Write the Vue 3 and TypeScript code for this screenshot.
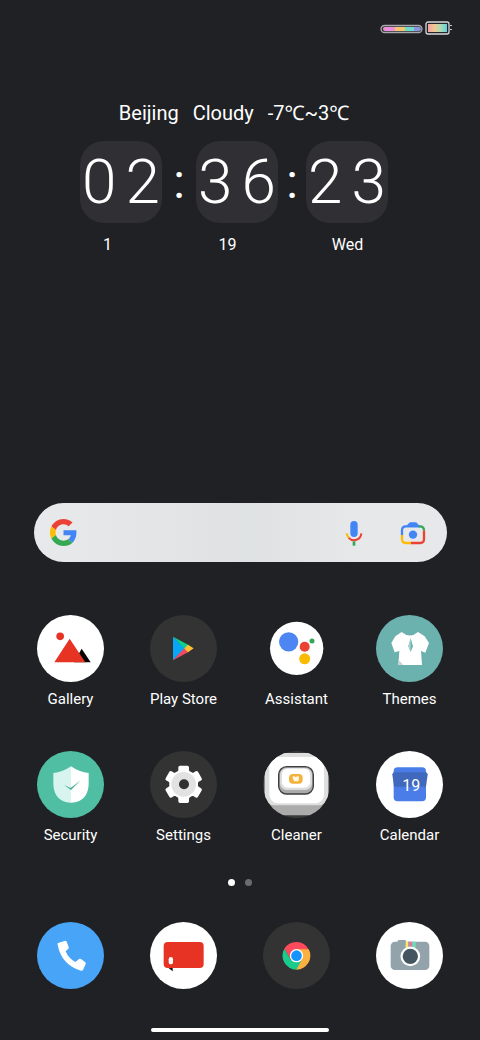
<script setup lang="ts">
import { ref } from 'vue'

interface App {
  id: string
  label: string
  view: string
}

const apps: App[] = [
  { id: 'gallery', label: 'Gallery', view: '53 29 201 201' },
  { id: 'play', label: 'Play Store', view: '392 29 201 201' },
  { id: 'assistant', label: 'Assistant', view: '40 29 201 201' },
  { id: 'themes', label: 'Themes', view: '379 29 201 201' },
  { id: 'security', label: 'Security', view: '53 32 201 201' },
  { id: 'settings', label: 'Settings', view: '392 32 201 201' },
  { id: 'cleaner', label: 'Cleaner', view: '41 32 201 201' },
  { id: 'calendar', label: 'Calendar', view: '379 32 201 201' },
]

const dock: App[] = [
  { id: 'phone', label: 'Phone', view: '52 156 201 201' },
  { id: 'messages', label: 'Messages', view: '391 156 201 201' },
  { id: 'chrome', label: 'Chrome', view: '69 156 201 201' },
  { id: 'camera', label: 'Camera', view: '408 156 201 201' },
]

const weather = ['Beijing', 'Cloudy', '-7℃~3℃']
const time = ['02', '36', '23']
const date = ['1', '19', 'Wed']
const query = ref('')
const page = ref(0)
const teeth = [0, 60, 120, 180, 240, 300]
</script>

<template>
  <main class="home">
    <header class="status">
      <svg class="status-icons" viewBox="0 0 75 16" aria-hidden="true">
        <defs>
          <linearGradient id="bat" x1="0" x2="1">
            <stop offset="0" stop-color="#f2a2a5" />
            <stop offset="0.35" stop-color="#f0c890" />
            <stop offset="0.7" stop-color="#a5dcb8" />
            <stop offset="1" stop-color="#62cfe0" />
          </linearGradient>
          <clipPath id="pill"><rect x="3" y="7" width="38" height="4" rx="2" /></clipPath>
        </defs>
        <rect x="1" y="5.5" width="41" height="7" rx="3.5" fill="#35363a" stroke="#a9a9ad" stroke-width="1.3" />
        <g clip-path="url(#pill)">
          <rect x="2" y="7" width="13" height="4" fill="#ee8fdc" />
          <rect x="15" y="7" width="10" height="4" fill="#f3c571" />
          <rect x="25" y="7" width="9" height="4" fill="#6fdcc9" />
          <rect x="34" y="7" width="8" height="4" fill="#8c92e0" />
        </g>
        <rect x="46" y="2" width="23" height="12" rx="2" fill="#242529" stroke="#d9d9dc" stroke-width="1.3" />
        <rect x="48" y="4" width="19" height="8" fill="url(#bat)" />
        <path d="M70 5.500h2M70 9.500h2" stroke="#c9c9cc" stroke-width="1.2" />
      </svg>
    </header>

    <section class="widget" aria-label="Clock and weather">
      <p class="weather"><span v-for="w in weather" :key="w">{{ w }}</span></p>
      <div class="clock">
        <template v-for="(pair, i) in time" :key="i">
          <span v-if="i > 0" class="colon" :class="{ wide: i === 1 }">:</span>
          <span class="tile"><span v-for="(d, j) in pair" :key="j">{{ d }}</span></span>
        </template>
      </div>
      <p class="date"><span v-for="d in date" :key="d">{{ d }}</span></p>
    </section>

    <form class="search" role="search" @submit.prevent>
      <svg class="google" viewBox="0 0 48 48" aria-hidden="true">
        <path fill="#ea4335" d="M24 9.500c3.540 0 6.710 1.220 9.210 3.600l6.850-6.850C35.900 2.380 30.470 0 24 0 14.620 0 6.510 5.380 2.560 13.220l7.980 6.190C12.430 13.720 17.740 9.500 24 9.500z" />
        <path fill="#4285f4" d="M46.980 24.550c0-1.570-.15-3.090-.38-4.550H24v9.020h12.940c-.58 2.960-2.260 5.480-4.780 7.180l7.730 6c4.510-4.180 7.090-10.360 7.090-17.650z" />
        <path fill="#fbbc05" d="M10.530 28.590c-.48-1.450-.76-2.990-.76-4.590s.27-3.140.76-4.590l-7.980-6.190C.92 16.460 0 20.120 0 24c0 3.880.92 7.540 2.560 10.780l7.970-6.190z" />
        <path fill="#34a853" d="M24 48c6.480 0 11.930-2.130 15.890-5.810l-7.730-6c-2.150 1.450-4.920 2.300-8.160 2.300-6.260 0-11.570-4.220-13.470-9.910l-7.980 6.190C6.510 42.620 14.620 48 24 48z" />
      </svg>
      <input v-model="query" type="text" aria-label="Search" />
      <button type="button" class="tool" aria-label="Voice search">
        <svg viewBox="61 71 84 84" aria-hidden="true">
          <rect x="92" y="77" width="22" height="48" rx="11" fill="#4285f4" />
          <path d="M81 114a22 22 0 0 0 7 14" fill="none" stroke="#fbbc05" stroke-width="6" />
          <path d="M87 127.500a22 22 0 0 0 38-13.500" fill="none" stroke="#ea4335" stroke-width="6" />
          <path d="M103 138v13" stroke="#34a853" stroke-width="8" />
        </svg>
      </button>
      <button type="button" class="tool" aria-label="Search with camera">
        <svg viewBox="237 71 84 84" aria-hidden="true">
          <g fill="none" stroke-width="7">
            <path d="M246 119v-14q0-12 12-12h42" stroke="#4285f4" />
            <path d="M296 93h4q12 0 12 13" stroke="#34a853" />
            <path d="M312 106v26q0 11-11 11h-29" stroke="#ea4335" />
            <path d="M246 119v13q0 11 11 11h16" stroke="#fbbc05" />
          </g>
          <path d="M257 94l10-11q2-2 5-2h14q3 0 5 2l9 11z" fill="#4285f4" />
          <circle cx="279" cy="118" r="12.500" fill="#4285f4" />
        </svg>
      </button>
    </form>

    <nav class="apps" aria-label="Apps">
      <button v-for="a in apps" :key="a.id" type="button" class="app">
        <svg class="icon" :viewBox="a.view" aria-hidden="true">
          <g v-if="a.id === 'gallery'">
            <circle cx="153.500" cy="129.500" r="100.500" fill="#fff" />
            <circle cx="122.500" cy="93" r="11.500" fill="#e73323" />
            <path d="M187 130l27 41h-50z" fill="#050505" />
            <path d="M151 100l27 41 20 30h-93z" fill="#e73323" />
          </g>
          <g v-else-if="a.id === 'play'">
            <circle cx="492.500" cy="129.500" r="100.500" fill="#333" />
            <path d="M461 94l37 36-37 35z" fill="#08a7f5" />
            <path d="M461 94l48 26-13 10z" fill="#12d08a" />
            <path d="M461 165l35-37 13 11z" fill="#f2495f" />
            <path d="M506 118.500l17 10.500-17 11.500-11-11z" fill="#fcc033" />
          </g>
          <g v-else-if="a.id === 'assistant'">
            <circle cx="141" cy="129" r="80" fill="#fff" />
            <circle cx="117" cy="109.500" r="29" fill="#4d86f3" />
            <circle cx="165" cy="124.500" r="15" fill="#ea4335" />
            <circle cx="165" cy="160.500" r="16.500" fill="#fabb05" />
            <circle cx="187" cy="107" r="7.500" fill="#34a853" />
          </g>
          <g v-else-if="a.id === 'themes'">
            <circle cx="479.500" cy="129.500" r="100.500" fill="#6bb1ad" />
            <path d="M456 80q25 21 49 0l20 13 13 20-11 29-13-5 3 42h-71l3-42-14 4-10-28 12-20z" fill="#fff" />
            <path d="M483 99l7 24-7 17-7-17z" fill="#6bb1ad" />
            <path d="M483 99v41l-7-17z" fill="#a7d3d0" />
            <path d="M447 165l14 13-14 1z" fill="#c8d2d2" />
          </g>
          <g v-else-if="a.id === 'security'">
            <circle cx="153.500" cy="132.500" r="100.500" fill="#4fbea3" />
            <path d="M155 78q24 17 53 20v33q-1 43-37 54-8 2-16 2z" fill="#fff" />
            <path d="M155 78q-24 17-53 20v33q1 43 37 54 8 2 16 2z" fill="#d7f5ee" />
            <path d="M134 134l20 9 30-23-29 29z" fill="#45ad93" />
          </g>
          <g v-else-if="a.id === 'settings'">
            <circle cx="492.500" cy="132.500" r="100.500" fill="#333" />
            <g fill="#fff">
              <circle cx="493" cy="132" r="43" />
              <path v-for="t in teeth" :key="t" d="M472 98q5-4 5-10v-7q0-5 5-5h22q5 0 5 5v7q0 6 5 10z" :transform="`rotate(${t} 493 132)`" />
            </g>
            <circle cx="493" cy="132" r="37" fill="#e2e2e2" />
            <circle cx="494" cy="132" r="15" fill="#303030" />
          </g>
          <g v-else-if="a.id === 'cleaner'">
            <clipPath id="cleaner-disc"><circle cx="141.500" cy="132.500" r="100.500" /></clipPath>
            <g clip-path="url(#cleaner-disc)">
              <rect x="41" y="32" width="201" height="201" fill="#3a3a3b" />
              <rect x="46" y="38" width="191" height="187" rx="44" fill="#ababab" />
              <rect x="46" y="38" width="191" height="157" rx="30" fill="#dedede" />
              <rect x="60" y="50" width="164" height="139" rx="26" fill="#fff" />
              <rect x="88" y="79" width="104" height="82" rx="24" fill="#aaa" stroke="#3e3e3e" stroke-width="4" />
              <rect x="92" y="83" width="96" height="66" rx="20" fill="#dcdcdc" />
              <rect x="98" y="85" width="84" height="57" rx="16" fill="#fff" />
              <rect x="119" y="101" width="41" height="29" rx="12" fill="#f3b23b" />
              <path d="M130 109q2-3 5-1l4 2 4-2h5q3 7-1 15h-12q-6-6-5-14z" fill="#fff6df" />
            </g>
          </g>
          <g v-else>
            <circle cx="479.500" cy="132.500" r="100.500" fill="#fff" />
            <rect x="432" y="81" width="97" height="102" rx="12" fill="#4b7de8" />
            <path d="M432 96h98l4 6-5 37h-96l-5-37z" fill="#4068bd" />
            <text x="485" y="152" class="day">19</text>
          </g>
        </svg>
        <span class="label">{{ a.label }}</span>
      </button>
    </nav>

    <div class="pages">
      <button v-for="n in 2" :key="n" type="button" class="dot" :class="{ on: page === n - 1 }" :aria-label="`Page ${n}`" @click="page = n - 1"></button>
    </div>

    <nav class="dock" aria-label="Dock">
      <button v-for="a in dock" :key="a.id" type="button" class="app" :aria-label="a.label">
        <svg class="icon" :viewBox="a.view" aria-hidden="true">
          <g v-if="a.id === 'phone'">
            <circle cx="152.500" cy="256.500" r="100.500" fill="#48a4f7" />
            <path d="M115 219l22-7q3 0 4 3l6 16q1 3-1 5l-8 8q8 21 29 32l11-9q3-2 6 0l13 10q2 2 1 5l-8 18q-2 3-6 2-59-18-70-78-1-4 1-5z" fill="#fff" />
          </g>
          <g v-else-if="a.id === 'messages'">
            <circle cx="491.500" cy="256.500" r="100.500" fill="#fff" />
            <path d="M442 290h17v14z" fill="#111" />
            <rect x="432" y="216" width="120" height="78" rx="12" fill="#e73323" />
            <rect x="447" y="261" width="13" height="22" rx="6.500" fill="#fff" />
          </g>
          <g v-else-if="a.id === 'chrome'">
            <circle cx="169.500" cy="256.500" r="100.500" fill="#333" />
            <path d="M169 257l-16 13L133 236A42 42 0 0 1 206 238l-30 4z" fill="#fd4b5d" />
            <path d="M169 238h37.500A42 42 0 0 1 170 299l-2-2 18-31z" fill="#fab13f" />
            <path d="M133 236l20 34 33-3-17 32A42 42 0 0 1 133 236z" fill="#1bcb8c" />
            <circle cx="169.500" cy="257" r="20" fill="#fff" />
            <circle cx="169.500" cy="257" r="16" fill="#1493fb" />
          </g>
          <g v-else>
            <circle cx="508.500" cy="256.500" r="100.500" fill="#fff" />
            <rect x="473" y="210" width="25" height="12" rx="4" fill="#93a3ab" />
            <rect x="452" y="215" width="116" height="85" rx="13" fill="#93a3ab" />
            <path d="M497 215h7v30h-7z" fill="#f6ec69" />
            <path d="M504 215h13v30h-13z" fill="#e5739c" />
            <path d="M504 215h4v30h-4z" fill="#b9a195" />
            <path d="M517 215h10v30h-10z" fill="#6ce0b4" />
            <circle cx="511" cy="259" r="29.500" fill="#fff" />
            <circle cx="511" cy="259" r="23" fill="#455560" />
          </g>
        </svg>
      </button>
    </nav>

    <div class="handle"></div>
  </main>
</template>

<style>
body {
  margin: 0;
  background: #202125;
}
</style>

<style scoped>
.home {
  box-sizing: border-box;
  min-height: 100vh;
  display: flex;
  flex-direction: column;
  padding-bottom: 8px;
  background: #202125;
  color: #fff;
  font-family: Roboto, "Noto Sans", sans-serif;
  font-size: 15px;
  line-height: 20px;
}
p {
  margin: 0;
}
button {
  padding: 0;
  border: 0;
  background: none;
  color: inherit;
  font: inherit;
  cursor: pointer;
}
svg {
  display: block;
}
.status {
  display: flex;
  justify-content: flex-end;
  padding: 20px 25px 0 0;
}
.status-icons {
  width: 75px;
  height: 16px;
}
.widget {
  display: flex;
  flex-direction: column;
  align-items: center;
  padding: 64px 12px 0 0;
}
.weather {
  display: flex;
  gap: 14px;
  font-size: 20px;
  line-height: 26px;
}
.clock {
  display: flex;
  align-items: center;
  margin-top: 15px;
}
.tile {
  display: flex;
  align-items: center;
  justify-content: center;
  gap: 9px;
  width: 82px;
  height: 82px;
  border-radius: 24px;
  background: #302f34;
  font-size: 62px;
  font-weight: 300;
  line-height: 82px;
}
.colon {
  width: 28px;
  font-size: 48px;
  font-weight: 400;
  line-height: 74px;
  text-align: center;
}
.colon.wide {
  width: 34px;
}
.date {
  display: grid;
  grid-template-columns: repeat(3, 120px);
  margin-top: 12px;
  padding-right: 13px;
  font-size: 16px;
  text-align: center;
}
.search {
  display: flex;
  align-items: center;
  height: 59px;
  box-sizing: border-box;
  margin: 248px 33px 0 34px;
  padding: 0 20px 0 16px;
  border-radius: 30px;
  background: linear-gradient(90deg, #e8e9eb, #dfe2e3 52%, #e7e8ea 80%, #e7e8ea);
}
.google {
  width: 27px;
  height: 27px;
}
.search input {
  flex: 1;
  min-width: 0;
  height: 40px;
  margin: 0 12px;
  border: 0;
  outline: 0;
  background: none;
  color: #202125;
  font: inherit;
}
.tool,
.tool svg {
  width: 28px;
  height: 28px;
}
.tool + .tool {
  margin-left: 31px;
}
.apps,
.dock {
  display: grid;
  grid-template-columns: repeat(4, 1fr);
  padding: 0 14px;
}
.apps {
  row-gap: 42px;
  margin-top: 53px;
}
.app {
  display: flex;
  flex-direction: column;
  align-items: center;
  gap: 7px;
}
.icon {
  width: 67px;
  height: 67px;
}
.day {
  fill: #fff;
  font-size: 48px;
  text-anchor: middle;
}
.pages {
  display: flex;
  justify-content: center;
  gap: 10px;
  margin-top: 34px;
}
.dot {
  width: 7px;
  height: 7px;
  border-radius: 50%;
  background: #6b6c6f;
}
.dot.on {
  background: #fff;
}
.dock {
  margin-top: 36px;
}
.handle {
  width: 37%;
  height: 4px;
  margin: auto auto 0;
  border-radius: 2px;
  background: #fff;
}
</style>
